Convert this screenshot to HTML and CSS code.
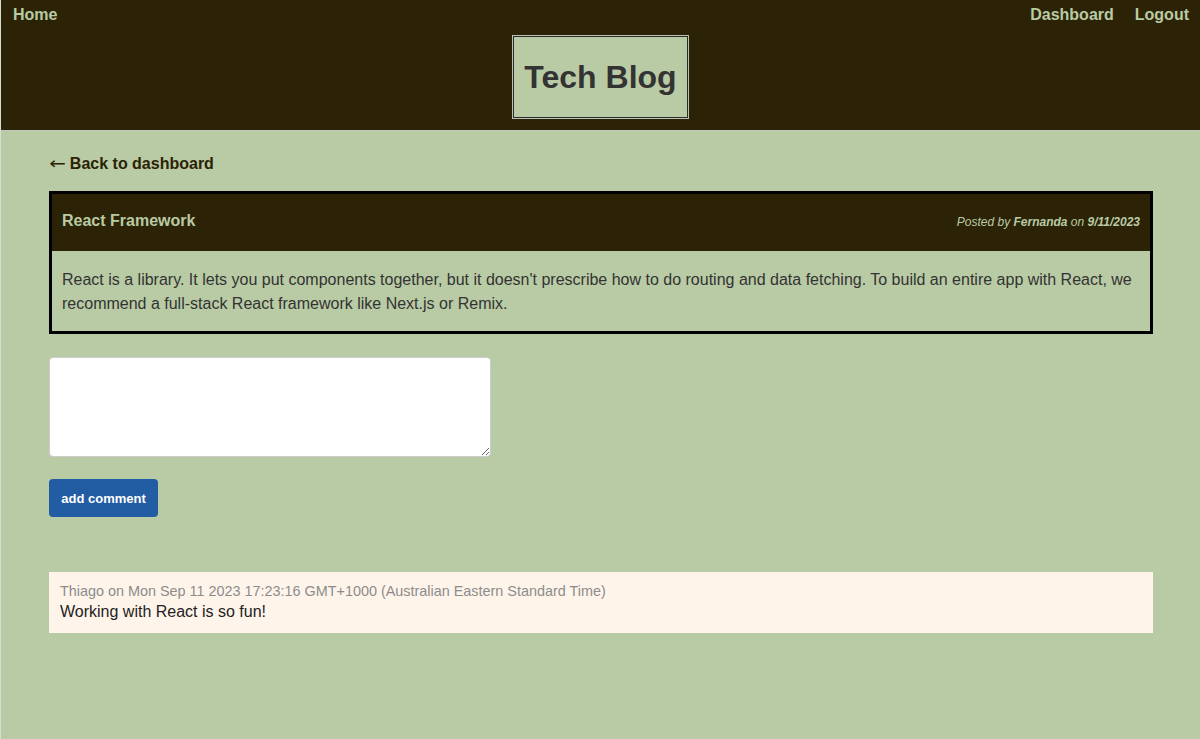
FILE: index.html
```html
<!DOCTYPE html>
<html lang="en">
<head>
<meta charset="utf-8">
<title>Tech Blog</title>
<link rel="stylesheet" href="styles.css">
</head>
<body>
<header class="site-header">
  <nav class="nav">
    <a class="nav-link" href="#">Home</a>
    <div class="nav-right">
      <a class="nav-link" href="#">Dashboard</a>
      <a class="nav-link" href="#">Logout</a>
    </div>
  </nav>
  <div class="brand-wrap">
    <h1 class="brand">Tech Blog</h1>
  </div>
</header>
<main class="main">
  <a class="back-link" href="#"><span class="arrow">&larr;</span> Back to dashboard</a>
  <article class="post">
    <div class="post-head">
      <h2 class="post-title">React Framework</h2>
      <p class="post-meta">Posted by <b>Fernanda</b> on <b>9/11/2023</b></p>
    </div>
    <div class="post-body">React is a library. It lets you put components together, but it doesn't prescribe how to do routing and data fetching. To build an entire app with React, we recommend a full-stack React framework like Next.js or Remix.</div>
  </article>
  <form class="comment-form">
    <textarea class="comment-input"></textarea>
    <button class="btn" type="button">add comment</button>
  </form>
  <section class="comments">
    <div class="comment">
      <div class="comment-meta">Thiago on Mon Sep 11 2023 17:23:16 GMT+1000 (Australian Eastern Standard Time)</div>
      <div class="comment-text">Working with React is so fun!</div>
    </div>
  </section>
</main>
</body>
</html>
```
FILE: styles.css
```css
html, body {
  margin: 0;
  padding: 0;
}
body {
  background: #b8cba4;
  font-family: "Liberation Sans", Arial, sans-serif;
  color: #333;
  min-height: 739px;
  border-left: 1px solid #d6dccf;
  box-sizing: border-box;
}
.site-header {
  background: #2c2206;
  height: 130px;
  border-bottom: 1px solid #c4c9c0;
  display: flex;
  flex-direction: column;
}
.nav {
  display: flex;
  justify-content: space-between;
  padding: 6px 11px 0 12px;
}
.nav-right {
  display: flex;
  gap: 21px;
}
.nav-link {
  color: #b8cba4;
  font-weight: bold;
  font-size: 16px;
  line-height: 18px;
  text-decoration: none;
}
.brand-wrap {
  display: flex;
  justify-content: center;
  margin-top: 12px;
}
.brand {
  margin: 0;
  background: #b8cba4;
  color: #333;
  font-size: 32px;
  line-height: 37px;
  font-weight: bold;
  padding: 22px 10px 21px;
  border: 1px solid #2c2c2c;
  box-shadow: 0 0 0 1px #b9c2b3;
}
.main {
  padding: 24px 47px 0 48px;
}
.back-link {
  display: block;
  color: #2c2206;
  font-weight: bold;
  font-size: 16px;
  line-height: 18px;
  text-decoration: none;
}
.arrow {
  display: inline-block;
  font-family: "DejaVu Sans", sans-serif;
  font-weight: normal;
  font-size: 16px;
  transform: scaleX(1.25);
  transform-origin: left center;
  margin-right: 3px;
}
.post {
  margin-top: 18px;
  border: 3px solid #000;
}
.post-head {
  background: #2c2206;
  display: flex;
  justify-content: space-between;
  align-items: baseline;
  padding: 17px 10px 21px;
}
.post-title {
  margin: 0;
  font-size: 16px;
  line-height: 19px;
  color: #b8cba4;
  font-weight: bold;
}
.post-meta {
  margin: 0;
  font-size: 12px;
  font-style: italic;
  color: #b8cba4;
}
.post-body {
  padding: 17px 10px 15px;
  font-size: 16px;
  line-height: 24px;
  color: #333;
}
.comment-form {
  display: flex;
  flex-direction: column;
  align-items: flex-start;
  margin-top: 23px;
}
.comment-input {
  width: 442px;
  height: 100px;
  box-sizing: border-box;
  background: #fff;
  border: 1px solid #ccc;
  border-radius: 4px;
  margin: 0;
  font-family: inherit;
}
.btn {
  margin-top: 22px;
  background: #225ca3;
  color: #fff;
  border: none;
  border-radius: 4px;
  font-family: "Liberation Sans", Arial, sans-serif;
  font-weight: bold;
  font-size: 13px;
  width: 109px;
  height: 38px;
  padding: 0;
}
.comments {
  margin-top: 55px;
}
.comment {
  background: #fff4ea;
  padding: 11px 11px 12px;
}
.comment-meta {
  font-size: 14.4px;
  line-height: 16px;
  color: #8c8c8c;
}
.comment-text {
  margin-top: 4px;
  font-size: 16px;
  line-height: 18px;
  color: #222;
}
```
